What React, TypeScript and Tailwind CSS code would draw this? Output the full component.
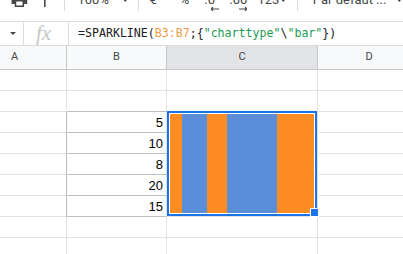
const values = [5, 10, 8, 20, 15];
const barColors = ["#fd8c22", "#5b8ed8"];

function Caret({ w = 7, h = 4, className = "" }: { w?: number; h?: number; className?: string }) {
  return (
    <svg width={w} height={h} viewBox={`0 0 ${w} ${h}`} className={className}>
      <path d={`M0 0h${w}L${w / 2} ${h}z`} fill="#444746" />
    </svg>
  );
}

function Sep({ className = "" }: { className?: string }) {
  return <div className={`w-px bg-[#dadce0] ${className}`} />;
}

function Toolbar() {
  return (
    <div className="h-[22px] border-b border-[#dadce0] overflow-hidden">
      <div className="flex items-center h-[19px] -mt-[10px] text-[13px] text-[#444746] font-['Roboto',sans-serif] leading-none">
        <svg width="20" height="20" viewBox="0 0 24 24" className="ml-[10px]">
          <path
            fill="#444746"
            d="M19 8H5c-1.66 0-3 1.34-3 3v6h4v4h12v-4h4v-6c0-1.66-1.34-3-3-3zm-3 11H8v-5h8v5zm3-7c-.55 0-1-.45-1-1s.45-1 1-1 1 .45 1 1-.45 1-1 1zm-1-9H6v4h12V3z"
          />
        </svg>
        <svg width="20" height="20" viewBox="0 0 24 24" className="ml-[8px]">
          <path
            fill="none"
            stroke="#444746"
            strokeWidth="2"
            d="M10 21V11h10V5h-3M5 3h12v4H5z"
          />
        </svg>
        <Sep className="ml-[8px] h-[22px]" />
        <span className="ml-[13px]">100%</span>
        <Caret className="ml-[13px]" />
        <Sep className="ml-[9px] h-[22px]" />
        <span className="ml-[11px]">€</span>
        <span className="ml-[23px]">%</span>
        <div className="ml-[15px] self-start mt-[3px] flex flex-col w-[16px]">
          <span>.0</span>
          <svg width="8" height="4" viewBox="0 0 8 4" className="self-end mt-[1px]">
            <path d="M0 2h8M2 0L0 2l2 2" stroke="#444746" strokeWidth="1.2" fill="none" />
          </svg>
        </div>
        <div className="ml-[10px] self-start mt-[3px] flex flex-col w-[19px]">
          <span>.00</span>
          <svg width="8" height="4" viewBox="0 0 8 4" className="self-end mt-[1px]">
            <path d="M0 2h8M6 0l2 2-2 2" stroke="#444746" strokeWidth="1.2" fill="none" />
          </svg>
        </div>
        <span className="ml-[10px]">123</span>
        <Caret className="ml-[1px]" />
        <Sep className="ml-[10px] h-[22px]" />
        <span className="ml-[15px] whitespace-nowrap">Par défaut ...</span>
        <Caret className="ml-[10px]" />
      </div>
    </div>
  );
}

function FormulaBar() {
  return (
    <div className="h-[24px] border-b border-[#dadce0] flex items-stretch">
      <div className="flex items-center ml-[10px]">
        <Caret w={6} h={3} />
      </div>
      <Sep className="ml-[7px]" />
      <div className="ml-[12px] w-[32px] flex items-center">
        <span className="italic text-[21px] leading-none text-[#c4c7c5] font-['Liberation_Serif',serif]">fx</span>
      </div>
      <Sep />
      <div className="ml-[9px] flex items-center whitespace-nowrap text-[11.6px] text-[#202124] font-['DejaVu_Sans_Mono',monospace]">
        <span>=SPARKLINE(</span>
        <span className="text-[#f39a4a]">B3:B7</span>
        <span>;{"{"}</span>
        <span className="text-[#1a9a55]">"charttype"</span>
        <span>\</span>
        <span className="text-[#1a9a55]">"bar"</span>
        <span>{"})"}</span>
      </div>
    </div>
  );
}

function Sparkline() {
  return (
    <div className="flex w-full h-full">
      {values.map((v, i) => (
        <div key={i} style={{ flexGrow: v, flexBasis: 0, backgroundColor: barColors[i % 2] }} />
      ))}
    </div>
  );
}

export default function App() {
  const rows = [1, 2, 3, 4, 5, 6, 7, 8, 9];
  const bValues: Record<number, number> = { 3: 5, 4: 10, 5: 8, 6: 20, 7: 15 };
  const inData = (r: number) => r >= 3 && r <= 7;

  return (
    <div className="w-[403px] h-[254px] overflow-hidden bg-white font-['Roboto',sans-serif]">
      <Toolbar />
      <FormulaBar />
      <div className="grid grid-cols-[67px_100px_151px_1fr] grid-rows-[24px_repeat(9,21px)]">
        <div className="bg-[#f8f9fa] border-r border-b border-[#c4c7c5] flex items-center justify-center pr-[37px] text-[11px] text-[#444746]">A</div>
        <div className="bg-[#f8f9fa] border-r border-b border-[#c4c7c5] flex items-center justify-center text-[11px] text-[#444746]">B</div>
        <div className="bg-[#e1e3e6] border-r border-b border-[#c4c7c5] flex items-center justify-center text-[11px] text-[#444746]">C</div>
        <div className="bg-[#f8f9fa] border-b border-[#c4c7c5] flex items-center justify-center pl-[17px] text-[11px] text-[#444746]">D</div>

        <div className="col-start-3 row-start-4 row-span-5 relative border-r border-b border-[#e2e2e3]">
          <div className="absolute -top-px left-0 right-0 bottom-0 z-10 border-2 border-[#1a73e8] bg-white p-px">
            <Sparkline />
            <div className="absolute -right-[4px] -bottom-[3px] w-[9px] h-[9px] bg-[#1a73e8] border border-white" />
          </div>
        </div>

        {rows.map((r) => (
          <div key={r} className="contents">
            <div className={`border-b border-r border-b-[#e2e2e3] ${inData(r) ? "border-r-[#bdbdbd]" : "border-r-[#e2e2e3]"}`} />
            <div
              className={`border-r border-r-[#e2e2e3] border-b ${
                r >= 2 && r <= 7 ? "border-b-[#bdbdbd]" : "border-b-[#e2e2e3]"
              } flex items-end justify-end pr-[3px] pb-[3px] text-[13px] leading-none text-black font-['Liberation_Sans',Arial,sans-serif]`}
            >
              {bValues[r] ?? ""}
            </div>
            {!inData(r) && <div className="border-r border-b border-[#e2e2e3]" />}
            <div className="border-b border-[#e2e2e3]" />
          </div>
        ))}
      </div>
    </div>
  );
}
